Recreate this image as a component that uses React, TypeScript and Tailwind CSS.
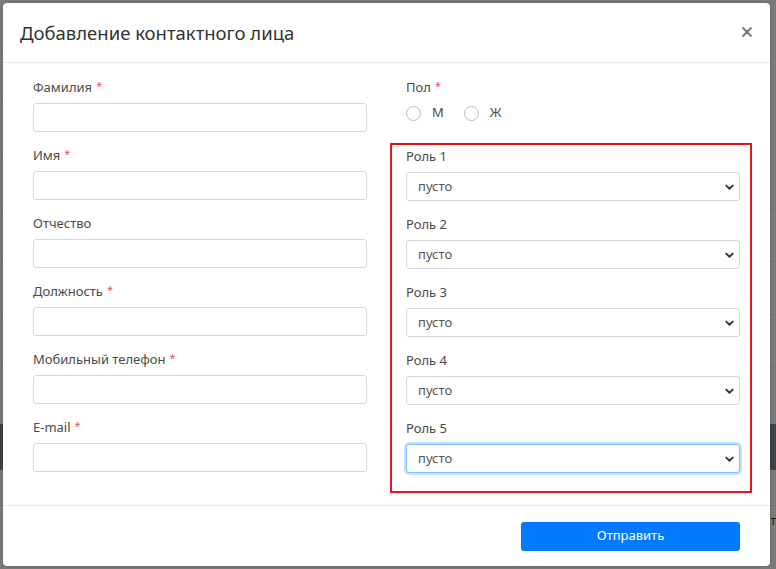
import React from 'react';

const font = { fontFamily: '"Noto Sans", "Open Sans", sans-serif' };

const Chevron = () => (
  <svg className="pointer-events-none absolute right-[5px] top-1/2 -translate-y-1/2" width="11" height="11" viewBox="0 0 12 12">
    <path d="M2.5 4.5 L6 8 L9.5 4.5" fill="none" stroke="#343a40" strokeWidth="2.2" strokeLinecap="round" strokeLinejoin="round" />
  </svg>
);

const Label = ({ text, required }: { text: string; required?: boolean }) => (
  <div className="mb-[8px] flex h-[16px] items-start text-[13px] leading-[16px] text-[#4a4a4a]">
    {text}
    {required && <span className="ml-[4px] text-[11px] leading-[14px] text-[#e8505b]">*</span>}
  </div>
);

const TextField = ({ label, required }: { label: string; required?: boolean }) => (
  <div className="mb-[15px] last:mb-0">
    <Label text={label} required={required} />
    <input className="block h-[29px] w-full rounded-[3px] border border-[#d3d8de] bg-white outline-none" />
  </div>
);

const RoleSelect = ({ n, focused }: { n: number; focused?: boolean }) => (
  <div className="mb-[15px] last:mb-0">
    <Label text={`Роль ${n}`} />
    <div className="relative">
      <select
        className={
          focused
            ? 'block h-[29px] w-full appearance-none rounded-[3px] border border-[#80bdff] bg-white pl-[11px] text-[13px] text-[#555] shadow-[0_0_0_2px_rgba(0,123,255,0.22)] outline-none'
            : 'block h-[29px] w-full appearance-none rounded-[3px] border border-[#d3d8de] bg-white pl-[11px] text-[13px] text-[#555] outline-none'
        }
        style={font}
        defaultValue=""
      >
        <option value="">пусто</option>
      </select>
      <Chevron />
    </div>
  </div>
);

const Radio = ({ label }: { label: string }) => (
  <label className="flex items-center">
    <span className="h-[15px] w-[15px] rounded-full border border-[#b5bcc4] bg-white" />
    <span className="ml-[11px] text-[13px] text-[#4a4a4a]">{label}</span>
  </label>
);

const App = () => {
  return (
    <div className="relative h-[569px] w-[776px] overflow-hidden bg-[#7a7a7a]" style={font}>
      {/* underlying page seen through the backdrop */}
      <div className="flex flex-col">
        <div className="h-[50px] border-b border-[#727272]" />
        <div className="h-[53px] border-b border-[#727272]" />
        <div className="h-[53px] border-b border-[#727272]" />
        <div className="h-[53px] border-b border-[#727272]" />
        <div className="h-[53px] border-b border-[#727272]" />
        <div className="h-[53px] border-b border-[#727272]" />
        <div className="h-[53px] border-b border-[#727272]" />
        <div className="h-[56px]" />
        <div className="h-[46px] bg-[#3c4245]" />
        <div className="h-[36px] border-b border-[#727272]" />
        <div className="flex h-[30px] items-center justify-end text-[12px] text-[#222]">т</div>
      </div>

      <div className="absolute left-[3px] top-[3px] w-[767px] rounded-[4px] bg-white shadow-[0_0_3px_rgba(0,0,0,0.25)]">
        <div className="flex h-[60px] items-center justify-between border-b border-[#e9ecef] pl-[17px] pr-[18px]">
          <h1 className="text-[18.5px] font-normal text-[#333]">Добавление контактного лица</h1>
          <svg width="10" height="10" viewBox="0 0 10 10" className="mb-[2px]">
            <path d="M1.2 1.2 L8.8 8.8 M8.8 1.2 L1.2 8.8" stroke="#7d7d7d" strokeWidth="2.2" strokeLinecap="round" />
          </svg>
        </div>

        <div className="flex gap-[39px] px-[30px] pt-[16px] pb-[12px]">
          <div className="w-[334px]">
            <TextField label="Фамилия" required />
            <TextField label="Имя" required />
            <TextField label="Отчество" />
            <TextField label="Должность" required />
            <TextField label="Мобильный телефон" required />
            <TextField label="E-mail" required />
          </div>

          <div className="w-[334px]">
            <Label text="Пол" required />
            <div className="flex h-[20px] items-center gap-[20px]">
              <Radio label="М" />
              <Radio label="Ж" />
            </div>
            <div className="-ml-[16px] -mr-[12px] mt-[20px] border-2 border-[#e8141c] pb-[18px] pl-[14px] pr-[10px] pt-[3px]">
              <RoleSelect n={1} />
              <RoleSelect n={2} />
              <RoleSelect n={3} />
              <RoleSelect n={4} />
              <RoleSelect n={5} focused />
            </div>
          </div>
        </div>

        <div className="flex h-[61px] items-center justify-end border-t border-[#e9ecef] pr-[30px]">
          <button className="h-[29px] w-[219px] rounded-[3px] bg-[#007bff] text-[13px] text-white">Отправить</button>
        </div>
      </div>
    </div>
  );
};

export default App;
